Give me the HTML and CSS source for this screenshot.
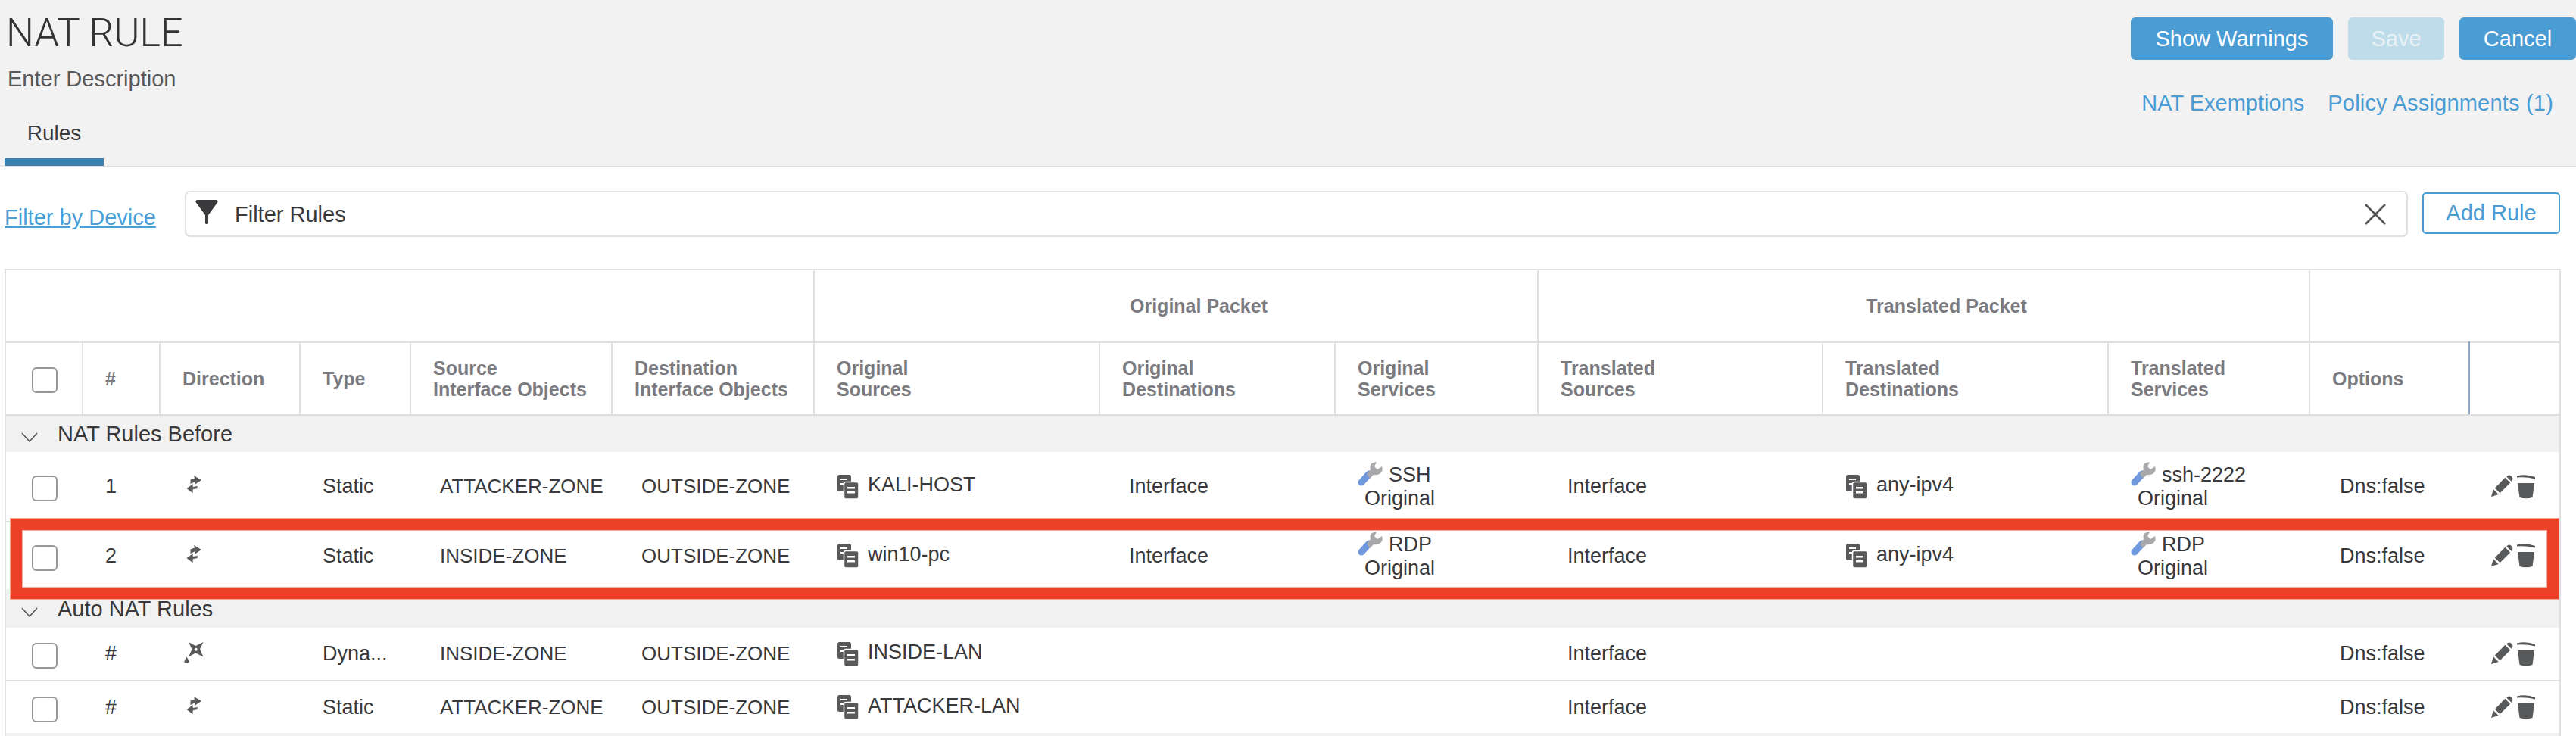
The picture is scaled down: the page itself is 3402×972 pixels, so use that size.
FILE: index.html
```html
<!DOCTYPE html>
<html lang="en">
<head>
<meta charset="utf-8">
<title>NAT RULE</title>
<link rel="stylesheet" href="styles.css">
</head>
<body>
<svg class="defs" width="0" height="0" aria-hidden="true">
  <symbol id="i-static" viewBox="0 0 20 24">
    <path d="M10 0 L20 6 L11 12 L11 8.500 L5.500 11 L5.500 5.500 L11 3.500 Z"/>
    <path d="M0 17 L9 10.500 L9 14.500 L15 13.500 L15 17.500 L9 18.500 L9 24 Z" stroke="#fff" stroke-width=".8"/>
  </symbol>
  <symbol id="i-dynamic" viewBox="0 0 26 27">
    <path fill-rule="evenodd" d="M6 0 L15.500 5 L25.500 0 L21 9.500 L25.500 19.500 L15.500 14.500 L6 19.500 L10.500 9.500 Z M15.700 7.700 a2 2 0 1 0 .01 0 Z"/>
    <path d="M3.500 19.500 L6 24 A3 3 0 1 1 1 24 Z"/>
  </symbol>
  <symbol id="i-object" viewBox="0 0 28 32">
    <rect x="0" y="0" width="18" height="22" rx="2.500"/>
    <rect x="4" y="5" width="9" height="2" fill="#fff"/>
    <rect x="4" y="11" width="5" height="2" fill="#fff"/>
    <rect x="8.500" y="9.500" width="19.500" height="22.500" rx="2.500" stroke="#fff" stroke-width="1.500"/>
    <rect x="13" y="16" width="10" height="2.500" fill="#fff"/>
    <rect x="13" y="22" width="10" height="2.500" fill="#fff"/>
  </symbol>
  <symbol id="i-wrench" viewBox="0 0 34 32">
    <path d="M5 27 L15 16" stroke="#7098dc" stroke-width="9" stroke-linecap="round" fill="none"/>
    <path d="M12 16 L17 10 Q15 3 21 1 Q23 0 25 .5 L22 6 L26 10 L32 6 Q34 12 30 15 Q26 18 21 17 L16 22 Z" fill="#a8a8ab"/>
  </symbol>
  <symbol id="i-pencil" viewBox="0 0 30 30">
    <path d="M0 30 L3 20 L10 27 Z"/>
    <path d="M5 18 L19 4 L26 11 L12 25 Z"/>
    <path d="M21 2.500 Q24 -1 27 1.500 L29 4 Q30 7 27.500 9 Z"/>
  </symbol>
  <symbol id="i-trash" viewBox="0 0 24 32">
    <path d="M0 1.500 Q12 -1.500 24 3 L24 5.500 Q12 2.500 0 3.500 Z"/>
    <path d="M1 11 H23 L20.500 30 Q12 32.500 3.500 30 Z"/>
  </symbol>
</svg>

<header class="head">
  <div class="head-left">
    <h1 class="title">NAT RULE</h1>
    <p class="desc">Enter Description</p>
    <div class="tab">Rules</div>
  </div>
  <div class="head-right">
    <div class="btns">
      <button class="btn btn-warn">Show Warnings</button>
      <button class="btn btn-save">Save</button>
      <button class="btn btn-cancel">Cancel</button>
    </div>
    <div class="links">
      <a class="link">NAT Exemptions</a>
      <a class="link link-wide">Policy Assignments (1)</a>
    </div>
  </div>
</header>

<section class="filter">
  <a class="device">Filter by Device</a>
  <div class="search">
    <svg class="funnel" viewBox="0 0 30 32"><path d="M3 0 H27 Q30 0 29.500 3 L17 20 V30.500 a2 1.500 0 0 1 -4 0 V20 L.5 3 Q0 0 3 0 Z"/></svg>
    <span class="search-text">Filter Rules</span>
    <svg class="clear" viewBox="0 0 28 28"><path d="M1 1 L27 27 M27 1 L1 27" stroke="#555" stroke-width="2.500" fill="none"/></svg>
  </div>
  <button class="add">Add Rule</button>
</section>

<section class="table">
  <div class="grid row-group">
    <div class="hc span6"></div>
    <div class="hc span3 gt">Original Packet</div>
    <div class="hc span3 gt">Translated Packet</div>
    <div class="hc span2 last"></div>
  </div>
  <div class="grid row-head">
    <div class="hc cb-cell"><span class="cb"></span></div>
    <div class="hc">#</div>
    <div class="hc">Direction</div>
    <div class="hc">Type</div>
    <div class="hc">Source<br>Interface Objects</div>
    <div class="hc">Destination<br>Interface Objects</div>
    <div class="hc">Original<br>Sources</div>
    <div class="hc">Original<br>Destinations</div>
    <div class="hc">Original<br>Services</div>
    <div class="hc">Translated<br>Sources</div>
    <div class="hc">Translated<br>Destinations</div>
    <div class="hc">Translated<br>Services</div>
    <div class="hc opt">Options</div>
    <div class="hc last"></div>
  </div>

  <div class="group g-first"><svg class="chev" viewBox="0 0 22 13"><path d="M1 1 L11 12 L21 1" fill="none" stroke="#555" stroke-width="1.600"/></svg>NAT Rules Before</div>

  <div class="grid row r-tall sep">
    <div class="c cb-cell"><span class="cb"></span></div>
    <div class="c t1">1</div>
    <div class="c t1 dir"><svg class="ic-static"><use href="#i-static"/></svg></div>
    <div class="c t1">Static</div>
    <div class="c t2 zone">ATTACKER-ZONE</div>
    <div class="c t2 zone">OUTSIDE-ZONE</div>
    <div class="c obj"><svg class="ic-object"><use href="#i-object"/></svg><span>KALI-HOST</span></div>
    <div class="c t2">Interface</div>
    <div class="c svc"><div class="svc-top"><svg class="ic-wrench"><use href="#i-wrench"/></svg>SSH</div><div class="svc-sub">Original</div></div>
    <div class="c t2">Interface</div>
    <div class="c obj"><svg class="ic-object"><use href="#i-object"/></svg><span>any-ipv4</span></div>
    <div class="c svc"><div class="svc-top"><svg class="ic-wrench"><use href="#i-wrench"/></svg>ssh-2222</div><div class="svc-sub">Original</div></div>
    <div class="c t3">Dns:false</div>
    <div class="c act"><svg class="ic-pencil"><use href="#i-pencil"/></svg><svg class="ic-trash"><use href="#i-trash"/></svg></div>
  </div>

  <div class="grid row r-tall2">
    <div class="c cb-cell"><span class="cb"></span></div>
    <div class="c t1">2</div>
    <div class="c t1 dir"><svg class="ic-static"><use href="#i-static"/></svg></div>
    <div class="c t1">Static</div>
    <div class="c t2 zone">INSIDE-ZONE</div>
    <div class="c t2 zone">OUTSIDE-ZONE</div>
    <div class="c obj"><svg class="ic-object"><use href="#i-object"/></svg><span>win10-pc</span></div>
    <div class="c t2">Interface</div>
    <div class="c svc"><div class="svc-top"><svg class="ic-wrench"><use href="#i-wrench"/></svg>RDP</div><div class="svc-sub">Original</div></div>
    <div class="c t2">Interface</div>
    <div class="c obj"><svg class="ic-object"><use href="#i-object"/></svg><span>any-ipv4</span></div>
    <div class="c svc"><div class="svc-top"><svg class="ic-wrench"><use href="#i-wrench"/></svg>RDP</div><div class="svc-sub">Original</div></div>
    <div class="c t3">Dns:false</div>
    <div class="c act"><svg class="ic-pencil"><use href="#i-pencil"/></svg><svg class="ic-trash"><use href="#i-trash"/></svg></div>
  </div>

  <div class="group g-second"><svg class="chev" viewBox="0 0 22 13"><path d="M1 1 L11 12 L21 1" fill="none" stroke="#555" stroke-width="1.600"/></svg>Auto NAT Rules</div>

  <div class="grid row r-short sep">
    <div class="c cb-cell"><span class="cb"></span></div>
    <div class="c t1">#</div>
    <div class="c t1 dir"><svg class="ic-dynamic"><use href="#i-dynamic"/></svg></div>
    <div class="c t1">Dyna...</div>
    <div class="c t2 zone">INSIDE-ZONE</div>
    <div class="c t2 zone">OUTSIDE-ZONE</div>
    <div class="c obj"><svg class="ic-object"><use href="#i-object"/></svg><span>INSIDE-LAN</span></div>
    <div class="c t2"></div>
    <div class="c svc"></div>
    <div class="c t2">Interface</div>
    <div class="c obj"></div>
    <div class="c svc"></div>
    <div class="c t3">Dns:false</div>
    <div class="c act"><svg class="ic-pencil"><use href="#i-pencil"/></svg><svg class="ic-trash"><use href="#i-trash"/></svg></div>
  </div>

  <div class="grid row r-short">
    <div class="c cb-cell"><span class="cb"></span></div>
    <div class="c t1">#</div>
    <div class="c t1 dir"><svg class="ic-static"><use href="#i-static"/></svg></div>
    <div class="c t1">Static</div>
    <div class="c t2 zone">ATTACKER-ZONE</div>
    <div class="c t2 zone">OUTSIDE-ZONE</div>
    <div class="c obj"><svg class="ic-object"><use href="#i-object"/></svg><span>ATTACKER-LAN</span></div>
    <div class="c t2"></div>
    <div class="c svc"></div>
    <div class="c t2">Interface</div>
    <div class="c obj"></div>
    <div class="c svc"></div>
    <div class="c t3">Dns:false</div>
    <div class="c act"><svg class="ic-pencil"><use href="#i-pencil"/></svg><svg class="ic-trash"><use href="#i-trash"/></svg></div>
  </div>

  <div class="foot"></div>
  <div class="blue-rule"></div>
  <div class="highlight"></div>
</section>
</body>
</html>
```

FILE: styles.css
```css
* { box-sizing: border-box; }
html, body { margin: 0; padding: 0; height: 972px; overflow: hidden; background: #fff; }
body { font-family: "Liberation Sans", Arial, sans-serif; font-size: 27px; color: #39393b; width: 3402px; }
.defs { position: absolute; }

/* header */
.head { height: 221px; background: #f2f2f2; border-bottom: 2px solid #dfdfdf; display: flex; justify-content: space-between; }
.head-left { padding-left: 6px; display: flex; flex-direction: column; }
.title { margin: 20px 0 0 2px; font: 300 52px/48px Roboto, "Liberation Sans", sans-serif; color: #333335; }
.desc { margin: 21px 0 0 4px; font-size: 29px; line-height: 30px; color: #58585a; }
.tab { margin-top: 42px; width: 131px; height: 58px; padding: 0; border-bottom: 10px solid #3a80b0; text-align: center; font-size: 28px; line-height: 30px; color: #39393b; }
.head-right { display: flex; flex-direction: column; align-items: flex-end; padding-top: 23px; }
.btns { display: flex; gap: 20px; }
.btn { height: 56px; border: 0; border-radius: 6px; background: #4a9cd5; color: #fff; font: 29px "Liberation Sans", Arial, sans-serif; padding: 0; }
.btn-warn { width: 267px; }
.btn-save { width: 127px; background: #bfdcea; color: #e8f2f7; }
.btn-cancel { width: 154px; }
.links { display: flex; gap: 31px; margin-top: 42px; padding-right: 30px; font-size: 29px; line-height: 30px; }
.link { color: #4a9cd5; }
.link-wide { letter-spacing: .2px; }

/* filter bar */
.filter { height: 134px; display: flex; align-items: flex-start; padding: 31px 21px 0 6px; }
.device { width: 238px; margin-top: 20px; color: #4a9fd8; font-size: 29px; text-decoration: underline; line-height: 30px; }
.search { width: 2936px; height: 61px; border: 2px solid #e0e0e0; border-radius: 7px; display: flex; align-items: center; padding: 0 27px 0 12px; }
.funnel { width: 30px; height: 32px; fill: #39393b; margin-right: 22px; margin-bottom: 6px; }
.search-text { flex: 1; font-size: 29px; padding-top: 2px; }
.clear { width: 28px; height: 28px; }
.add { width: 182px; height: 55px; margin: 2px 0 0 19px; border: 2px solid #4a9cd5; border-radius: 5px; background: #fff; color: #4a9cd5; font: 29px "Liberation Sans", Arial, sans-serif; padding: 0; }

/* table */
.table { position: relative; margin-left: 6px; width: 3376px; border: 2px solid #e0e0e0; border-bottom: 0; }
.grid { display: grid; grid-template-columns: 102px 102px 185px 146px 266px 267px 377px 311px 268px 376px 377px 266px 211px 118px; }
.row-group, .row-head { height: 96px; border-bottom: 2px solid #e0e0e0; }
.hc { display: flex; flex-direction: column; justify-content: center; padding-left: 29px; border-right: 2px solid #e0e0e0; font-weight: 700; font-size: 25px; line-height: 28px; color: #7a7a7f; }
.hc.last { border-right: 0; }
.hc.opt { border-right: 0; }
.span6 { grid-column: span 6; }
.span3 { grid-column: span 3; }
.span2 { grid-column: span 2; }
.gt { align-items: center; padding-left: 60px; }
.cb-cell { padding-left: 34px; }
.cb { display: block; width: 34px; height: 34px; border: 2px solid #98989c; border-radius: 6px; background: #fff; }
.hc.cb-cell { padding-top: 4px; }
.c.cb-cell { padding-top: 5px; }

.group { display: flex; align-items: center; background: #f1f1f1; padding-left: 20px; color: #39393b; font-size: 29px; }
.g-first { height: 48px; }
.g-second { height: 51px; padding-top: 2px; }
.chev { width: 22px; height: 13px; margin-right: 26px; margin-top: 8px; }

.row { align-items: center; background: #fff; }
.sep { border-bottom: 2px solid #e0e0e0; }
.r-tall { height: 93px; }
.r-tall2 { height: 88px; }
.r-short { height: 71px; }
.row.r-short:not(.sep) { height: 68px; }
.c { line-height: 31px; white-space: nowrap; }
.t1 { padding-left: 29px; }
.t2 { padding-left: 38px; }
.t3 { padding-left: 39px; }
.zone { font-size: 26px; }
.dir { padding-bottom: 5px; display: flex; }
.ic-static { width: 20px; height: 24px; fill: #58595b; margin-left: 5px; }
.ic-dynamic { width: 26px; height: 27px; fill: #58595b; margin-left: 2px; }
.obj { display: flex; align-items: center; padding: 0 0 4px 30px; }
.ic-object { width: 28px; height: 32px; fill: #58595b; margin: 4px 12px 0 0; }
.svc { padding-left: 29px; }
.r-tall2 .svc { padding-top: 2px; }
.svc-top { display: flex; align-items: flex-start; height: 31px; }
.svc-sub { padding-left: 9px; }
.ic-wrench { width: 34px; height: 32px; margin: -2px 7px 0 0; flex: none; }
.act { display: flex; align-items: center; padding-left: 28px; gap: 5px; }
.ic-pencil { width: 29px; height: 29px; fill: #58595b; margin-top: -2px; }
.ic-trash { width: 24px; height: 32px; fill: #58595b; }
.foot { height: 4px; background: #f1f1f1; }

/* overlays */
.blue-rule { position: absolute; left: 3252px; top: 94px; width: 2px; height: 96px; background: #8da6c9; }
.highlight { position: absolute; left: 6px; top: 328px; width: 3365px; height: 106px; border: 15.5px solid #ec4126; box-shadow: 0 0 0 1px #f3a595, inset 0 0 0 1px #f3b0a2; pointer-events: none; }
```
